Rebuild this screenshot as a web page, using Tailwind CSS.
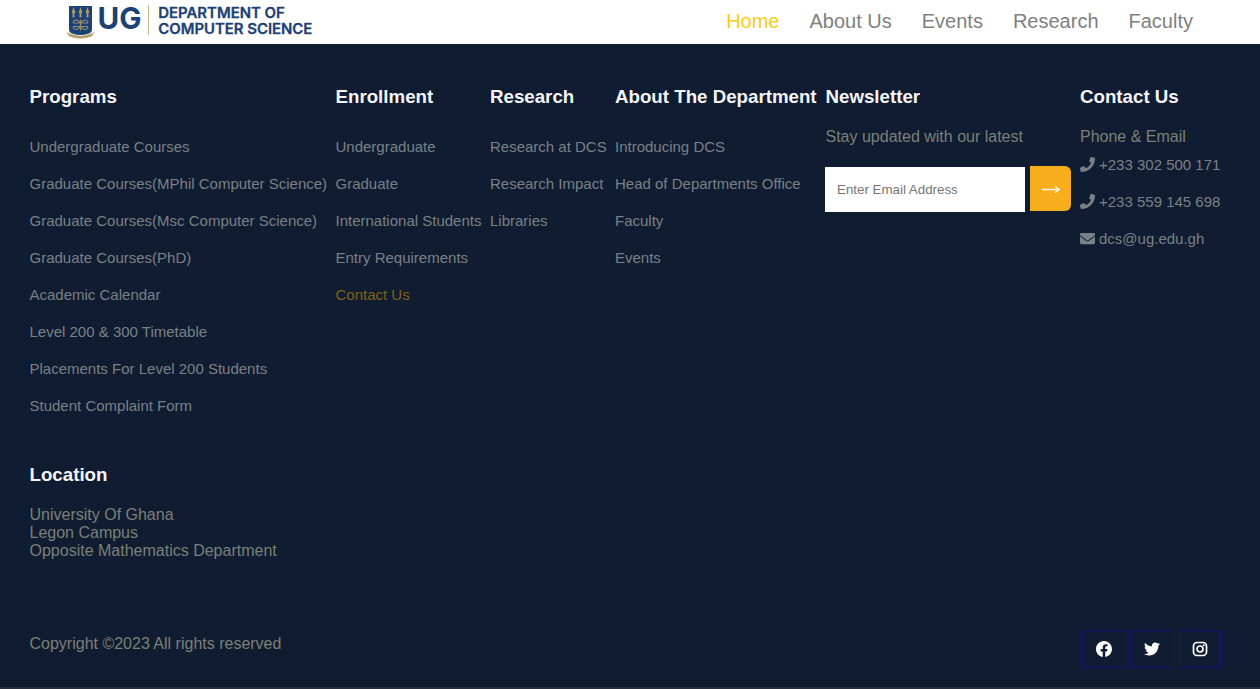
<!DOCTYPE html>
<html lang="en">
<head>
<meta charset="utf-8">
<title>Department of Computer Science</title>
<script src="https://cdn.jsdelivr.net/npm/@tailwindcss/browser@4"></script>
</head>
<body class="bg-[#101c31] font-['Liberation_Sans',Arial,sans-serif] h-[689px] overflow-hidden flex flex-col">
<header class="bg-white h-11 shrink-0 flex items-start justify-between pl-[66px] pr-[67px]">
  <svg class="w-[250px] h-11" viewBox="66 0 250 44" role="img" aria-label="UG Department of Computer Science">
    <path d="M69 6H92V29Q92 32.500 89 33.500Q80.500 36.500 72 33.500Q69 32.500 69 29Z" fill="#1c4175"/>
    <path d="M73.500 7l1.800 5.500-1 .8.300 4h-2.200l.3-4-1-.8zM80.500 7l1.800 5.500-1 .8.300 4h-2.200l.3-4-1-.8zM87.500 7l1.800 5.500-1 .8.300 4h-2.200l.3-4-1-.8z" fill="#b59a62"/>
    <path d="M80.500 19.500v11M76 20q-3.500.5-2.500 3h14q1-2.500-2.500-3q-3 .5-4.500 3q-1.500-2.500-4.500-3M76 29.500q-3.500-.5-2.500-3h14q1 2.500-2.500 3q-3-.5-4.500-3q-1.500 2.500-4.500 3" fill="none" stroke="#988c6c" stroke-width="1.100"/>
    <path d="M66.800 32l3.200 1.200q10.500 5 21 0l3.200-1.200-1.700 4.200q-12 5-24 0z" fill="#c9b184"/>
    <path d="M70.500 35.200q10 3.200 20 0" fill="none" stroke="#927c52" stroke-width=".8"/>
    <path d="M148.500 5V35" stroke="#cdb57f"/>
    <g fill="#1c4175" font-family="Inter, sans-serif">
      <text x="97.600" y="29.300" font-size="30.500" font-weight="700" textLength="44" lengthAdjust="spacingAndGlyphs">UG</text>
      <g font-size="14.600" font-weight="600" stroke="#1c4175" stroke-width=".3">
        <text x="158.300" y="17.800" textLength="126.500" lengthAdjust="spacingAndGlyphs">DEPARTMENT OF</text>
        <text x="158.300" y="33.800" textLength="154" lengthAdjust="spacingAndGlyphs">COMPUTER SCIENCE</text>
      </g>
    </g>
  </svg>
  <nav class="flex gap-[30px] text-xl leading-[23px] pt-2.5 text-[#808080]">
    <a class="text-[#ffcc10]">Home</a><a>About Us</a><a>Events</a><a>Research</a><a>Faculty</a>
  </nav>
</header>
<footer class="grow flex flex-col pl-[29.500px] pr-[39px] pt-[42px] text-base leading-[18px] whitespace-nowrap">
  <div class="grid grid-cols-[306px_154.500px_125px_210.500px_254.500px_auto] h-[378px]">
    <section>
      <h3 class="text-[18.720px] leading-[22px] font-bold text-[#f4f4fa]">Programs</h3>
      <ul class="mt-[30px] flex flex-col gap-5 text-[15px] leading-[17px] text-[#7a8186]">
        <li>Undergraduate Courses</li><li>Graduate Courses(MPhil Computer Science)</li><li>Graduate Courses(Msc Computer Science)</li><li>Graduate Courses(PhD)</li><li>Academic Calendar</li><li>Level 200 &amp; 300 Timetable</li><li>Placements For Level 200 Students</li><li>Student Complaint Form</li>
      </ul>
    </section>
    <section>
      <h3 class="text-[18.720px] leading-[22px] font-bold text-[#f4f4fa]">Enrollment</h3>
      <ul class="mt-[30px] flex flex-col gap-5 text-[15px] leading-[17px] text-[#7a8186]">
        <li>Undergraduate</li><li>Graduate</li><li>International Students</li><li>Entry Requirements</li><li class="text-[#806010]">Contact Us</li>
      </ul>
    </section>
    <section>
      <h3 class="text-[18.720px] leading-[22px] font-bold text-[#f4f4fa]">Research</h3>
      <ul class="mt-[30px] flex flex-col gap-5 text-[15px] leading-[17px] text-[#7a8186]">
        <li>Research at DCS</li><li>Research Impact</li><li>Libraries</li>
      </ul>
    </section>
    <section>
      <h3 class="text-[18.720px] leading-[22px] font-bold text-[#f4f4fa]">About The Department</h3>
      <ul class="mt-[30px] flex flex-col gap-5 text-[15px] leading-[17px] text-[#7a8186]">
        <li>Introducing DCS</li><li>Head of Departments Office</li><li>Faculty</li><li>Events</li>
      </ul>
    </section>
    <section>
      <h3 class="text-[18.720px] leading-[22px] font-bold text-[#f4f4fa]">Newsletter</h3>
      <p class="mt-5 text-[#7b8078]">Stay updated with our latest</p>
      <form class="mt-5 flex gap-[5px] -ml-[0.500px]">
        <input class="mt-px w-[200px] h-[45px] bg-white pl-3 text-[13.333px] placeholder:text-[#757575]" placeholder="Enter Email Address">
        <button type="button" aria-label="Subscribe" class="w-[41px] h-[45px] rounded-r-[6px] bg-[#f8ad1d] flex items-center justify-center">
          <svg class="w-5 h-3" viewBox="0 0 20 12" fill="none" stroke="#fffaf0" stroke-width="1.300"><path d="M1 6.500H18M14 3.200L18.300 6.500L14 9.800"/></svg>
        </button>
      </form>
    </section>
    <section>
      <h3 class="text-[18.720px] leading-[22px] font-bold text-[#f4f4fa]">Contact Us</h3>
      <p class="mt-5 text-[#7b8078]">Phone &amp; Email</p>
      <ul class="mt-2.5 flex flex-col gap-5 text-[15px] leading-[17px] text-[#7a8186]">
        <li class="flex gap-1"><svg class="size-[15px] mt-px" viewBox="0 0 512 512" fill="currentColor"><path d="M493.4 24.6l-104-24c-11.3-2.6-22.9 3.3-27.5 13.9l-48 112c-4.2 9.8-1.4 21.3 6.9 28l60.6 49.600c-36 76.700-98.900 140.500-177.200 177.200l-49.600-60.600c-6.800-8.300-18.200-11.100-28-6.900l-112 48C3.900 366.500-2 378.100.6 389.400l24 104C27.100 504.200 36.700 512 48 512c256.100 0 464-207.500 464-464 0-11.200-7.700-20.900-18.600-23.400z"/></svg>+233 302 500 171</li>
        <li class="flex gap-1"><svg class="size-[15px] mt-px" viewBox="0 0 512 512" fill="currentColor"><path d="M493.4 24.6l-104-24c-11.3-2.6-22.9 3.3-27.5 13.9l-48 112c-4.2 9.8-1.4 21.3 6.9 28l60.6 49.600c-36 76.700-98.900 140.500-177.200 177.200l-49.600-60.600c-6.800-8.300-18.200-11.100-28-6.900l-112 48C3.900 366.500-2 378.100.6 389.400l24 104C27.100 504.200 36.700 512 48 512c256.100 0 464-207.500 464-464 0-11.200-7.700-20.900-18.600-23.400z"/></svg>+233 559 145 698</li>
        <li class="flex gap-1"><svg class="size-[15px] mt-px" viewBox="0 0 512 512" fill="currentColor"><path d="M502.3 190.8c3.9-3.1 9.7-.2 9.7 4.7V400c0 26.5-21.5 48-48 48H48c-26.5 0-48-21.5-48-48V195.6c0-5 5.7-7.8 9.7-4.7 22.4 17.4 52.1 39.5 154.1 113.6 21.1 15.4 56.7 47.8 92.2 47.6 35.7.3 72-32.8 92.3-47.6 102-74.1 131.6-96.3 154-113.7zM256 320c23.2.4 56.6-29.2 73.4-41.4 132.7-96.3 142.8-104.7 173.4-128.7 5.8-4.5 9.2-11.5 9.2-18.9v-19c0-26.5-21.5-48-48-48H48c-26.5 0-48 21.5-48 48v19c0 7.4 3.4 14.3 9.2 18.9 30.6 23.9 40.7 32.4 173.4 128.7 16.8 12.2 50.2 41.8 73.4 41.4z"/></svg>dcs@ug.edu.gh</li>
      </ul>
    </section>
  </div>
  <section>
    <h3 class="text-[18.720px] leading-[22px] font-bold text-[#f4f4fa]">Location</h3>
    <p class="mt-5 text-[#7b8078]">University Of Ghana<br>Legon Campus<br>Opposite Mathematics Department</p>
  </section>
  <div class="mt-[70px] flex justify-between items-start">
    <p class="mt-[5px] text-[#7b8078]">Copyright ©2023 All rights reserved</p>
    <div class="flex text-white">
      <a class="w-11 h-[38px] mr-1 border border-[#15127a] flex items-center justify-center"><svg class="size-4" viewBox="0 0 16 16" fill="currentColor"><path d="M16 8.049c0-4.446-3.582-8.05-8-8.05C3.58 0-.002 3.603-.002 8.050c0 4.017 2.926 7.347 6.750 7.951v-5.625h-2.030V8.050H6.750V6.275c0-2.017 1.195-3.131 3.022-3.131.876 0 1.791.157 1.791.157v1.980h-1.009c-.993 0-1.303.621-1.303 1.258v1.510h2.218l-.354 2.326H9.250V16c3.824-.604 6.750-3.934 6.750-7.951z"/></svg></a>
      <a class="w-11 h-[38px] mr-[5px] border border-[#15127a] flex items-center justify-center"><svg class="size-4" viewBox="0 0 512 512" fill="currentColor"><path d="M459.37 151.716c.325 4.548.325 9.097.325 13.645 0 138.720-105.583 298.558-298.558 298.558-59.452 0-114.680-17.219-161.137-47.106 8.447.974 16.568 1.299 25.340 1.299 49.055 0 94.213-16.568 130.274-44.832-46.132-.975-84.792-31.188-98.112-72.772 6.498.974 12.995 1.624 19.818 1.624 9.421 0 18.843-1.300 27.614-3.573-48.081-9.747-84.143-51.980-84.143-102.985v-1.299c13.969 7.797 30.214 12.670 47.431 13.319-28.264-18.843-46.781-51.005-46.781-87.391 0-19.492 5.197-37.360 14.294-52.954 51.655 63.675 129.300 105.258 216.365 109.807-1.624-7.797-2.599-15.918-2.599-24.040 0-57.828 46.782-104.934 104.934-104.934 30.213 0 57.502 12.670 76.670 33.137 23.715-4.548 46.456-13.320 66.599-25.340-7.798 24.366-24.366 44.833-46.132 57.827 21.117-2.273 41.584-8.122 60.426-16.243-14.292 20.791-32.161 39.308-52.628 54.253z"/></svg></a>
      <a class="w-[42px] h-[38px] border border-[#15127a] flex items-center justify-center"><svg class="size-4" viewBox="0 0 16 16" fill="none" stroke="currentColor" stroke-width="1.700"><rect x="1.500" y="1.500" width="13" height="13" rx="3.500"/><circle cx="8" cy="8" r="3"/><circle cx="11.800" cy="4.200" r="1" fill="currentColor" stroke="none"/></svg></a>
    </div>
  </div>
</footer>
<div class="h-0.5 shrink-0 bg-[#292e3a]"></div>
</body>
</html>
